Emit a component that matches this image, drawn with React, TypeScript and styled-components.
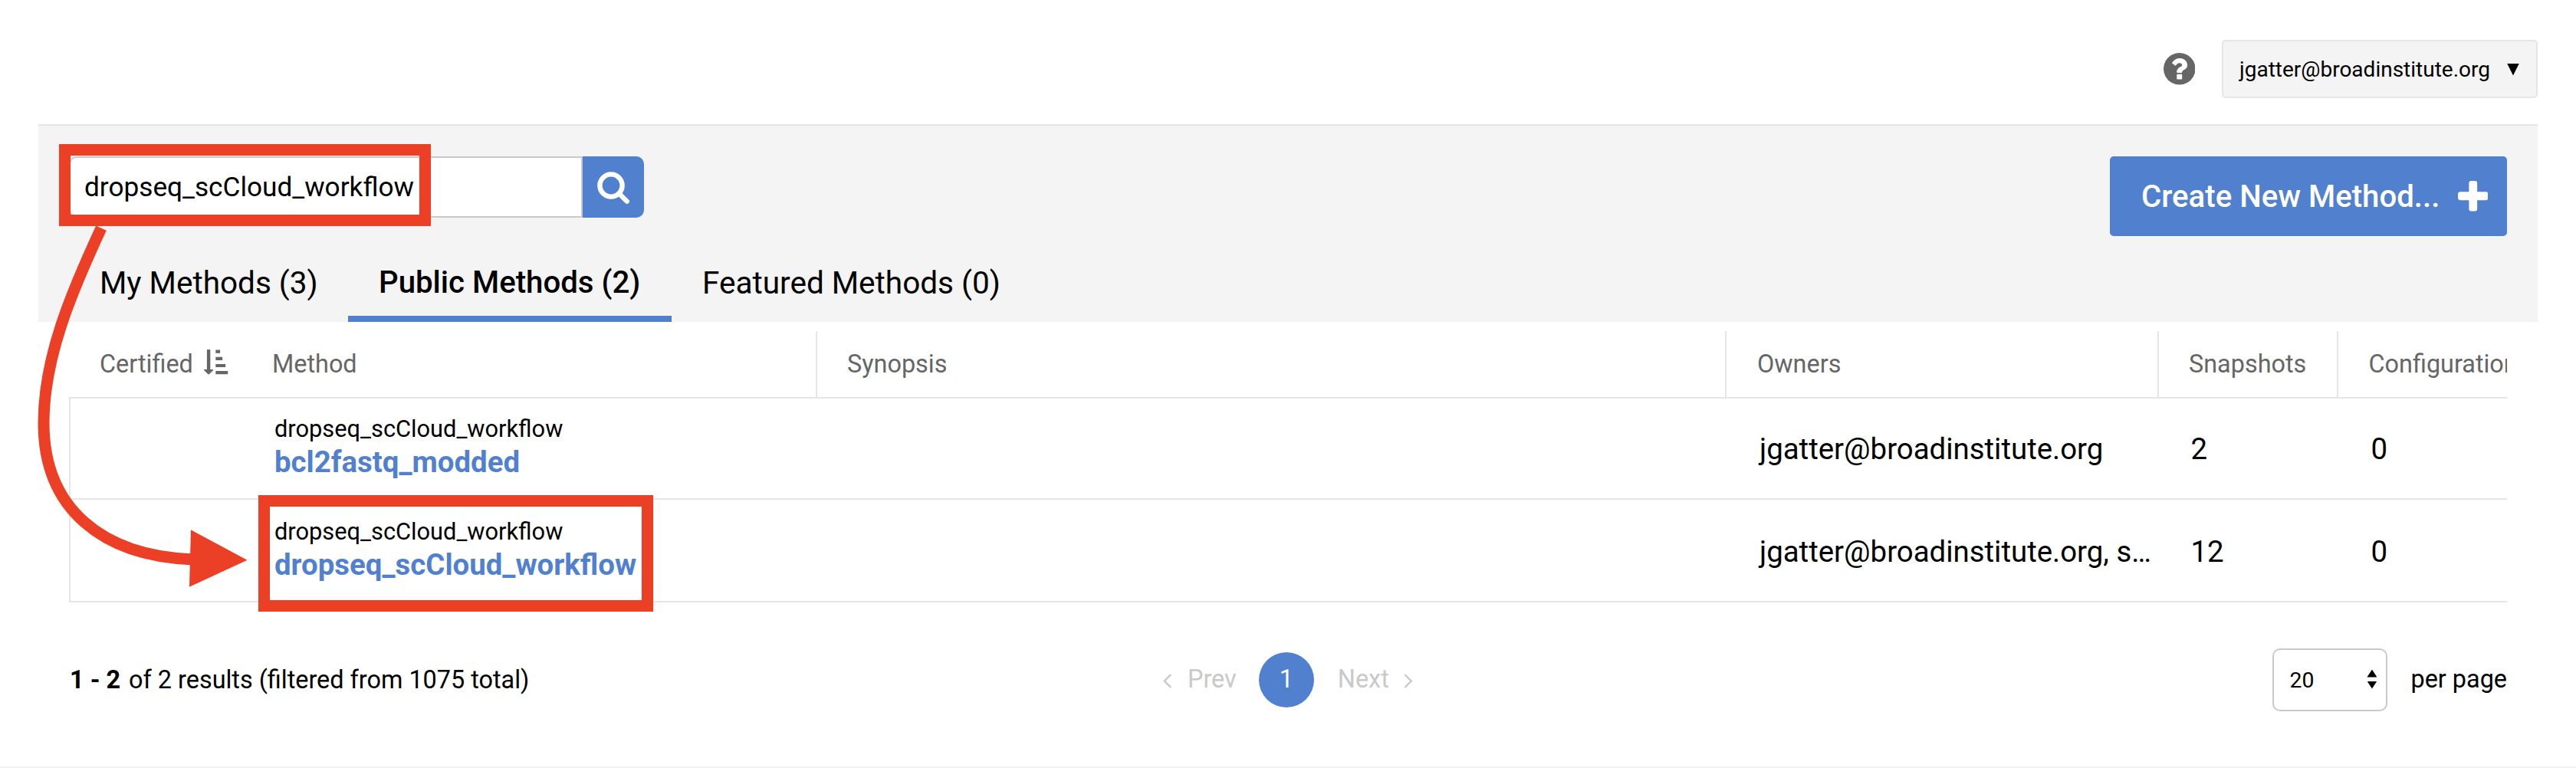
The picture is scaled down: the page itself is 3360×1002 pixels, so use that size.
import React from 'react';
import styled, { createGlobalStyle } from 'styled-components';

const BLUE = '#5181ce';
const RED = '#eb4026';
const LINE = '#e6e6e6';
const FIELD_LINE = '#c9c9c9';
const MUTED = '#666666';

const GlobalStyle = createGlobalStyle`
  *, *::before, *::after { box-sizing: border-box; }
  html, body { margin: 0; padding: 0; background: #fff; }
  body { font-family: Roboto, "Liberation Sans", sans-serif; color: #000; }
  button, input { font: inherit; color: inherit; }
`;

const Page = styled.div`
  position: relative;
  display: flex;
  flex-direction: column;
  width: 3360px;
  height: 1002px;
  overflow: hidden;
  background: #fff;
  border-bottom: 2px solid #f2f2f2;
`;

const TopBar = styled.header`
  display: flex;
  justify-content: flex-end;
  align-items: center;
  gap: 35px;
  height: 162px;
  padding: 52px 50px 34px 0;
`;

const UserMenu = styled.div`
  display: flex;
  align-items: center;
  justify-content: space-between;
  width: 412px;
  height: 76px;
  padding: 1px 22px 0 21px;
  border: 2px solid ${LINE};
  border-radius: 5px;
  background: #f4f4f4;
  font-size: 28px;
  line-height: 40px;
`;

const Caret = styled.span<{ $up?: boolean; $w: number; $h: number }>`
  width: ${p => p.$w}px;
  height: ${p => p.$h}px;
  background: #000;
  clip-path: ${p => (p.$up ? 'polygon(50% 0, 100% 100%, 0 100%)' : 'polygon(0 0, 100% 0, 50% 100%)')};
`;

const Banner = styled.section`
  display: flex;
  flex-direction: column;
  justify-content: space-between;
  height: 258px;
  margin: 0 50px;
  padding: 40px 40px 0;
  border-top: 2px solid ${LINE};
  background: #f4f4f4;
`;

const Actions = styled.div`
  display: flex;
  justify-content: space-between;
  align-items: flex-start;
`;

const SearchForm = styled.div`
  display: flex;
  height: 80px;
`;

const SearchInput = styled.input`
  width: 670px;
  height: 80px;
  padding: 0 18px;
  border: 2px solid ${FIELD_LINE};
  border-radius: 10px 0 0 10px;
  background: #fff;
  outline: none;
  font-size: 35.2px;
`;

const SearchButton = styled.button`
  display: flex;
  width: 80px;
  height: 80px;
  padding: 20px 0 0 19px;
  border: 0;
  border-radius: 0 10px 10px 0;
  background: ${BLUE};
`;

const CreateButton = styled.button`
  display: flex;
  align-items: center;
  justify-content: space-between;
  width: 518px;
  height: 104px;
  padding: 0 25px 0 41px;
  border: 0;
  border-radius: 5px;
  background: ${BLUE};
  color: #fff;
  font-size: 40.2px;
  font-weight: 500;
`;

const Tabs = styled.nav`
  display: flex;
  height: 100px;
`;

const Tab = styled.a<{ $active?: boolean; $w: number }>`
  width: ${p => p.$w}px;
  height: 100px;
  padding: 25px 0 0 40px;
  border-bottom: 8px solid ${p => (p.$active ? BLUE : 'transparent')};
  font-size: ${p => (p.$active ? 40.2 : 40.5)}px;
  font-weight: ${p => (p.$active ? 500 : 400)};
  line-height: 48px;
  white-space: nowrap;
`;

const Table = styled.div`
  display: flex;
  flex-direction: column;
  margin: 12px 90px 0;
  overflow: hidden;
`;

const HeadRow = styled.div`
  display: grid;
  grid-template-columns: 264px 710px 1186px 564px 234px 400px;
  height: 86px;
  color: ${MUTED};
  font-size: 32.4px;
`;

const HeadCell = styled.div<{ $divided?: boolean; $pad: number }>`
  display: flex;
  align-items: center;
  gap: 15px;
  padding-left: ${p => p.$pad}px;
  border-left: ${p => (p.$divided ? `2px solid ${LINE}` : '0')};
`;

const Body = styled.div`
  border: solid ${LINE};
  border-width: 0 0 2px 2px;
`;

const Row = styled.div<{ $h: number; $top?: number }>`
  display: grid;
  grid-template-columns: 262px 710px 1186px 564px 234px 400px;
  height: ${p => p.$h}px;
  padding-top: ${p => p.$top ?? 0}px;
  border-top: 2px solid ${LINE};
`;

const Cell = styled.div<{ $pad: number }>`
  display: flex;
  align-items: center;
  padding-left: ${p => p.$pad}px;
  font-size: 38.4px;
  white-space: nowrap;
`;

const MethodCell = styled.div`
  display: flex;
  flex-direction: column;
  padding: 22px 0 0 4px;
`;

const Namespace = styled.span`
  font-size: 30.8px;
  line-height: 36px;
`;

const MethodLink = styled.a`
  margin-top: 2px;
  color: ${BLUE};
  font-size: 38.4px;
  font-weight: 700;
  line-height: 46px;
`;

const Footer = styled.footer`
  display: grid;
  grid-template-columns: 1427px 326px 1fr;
  align-items: center;
  height: 82px;
  margin: 60px 90px 0;
  font-size: 32.4px;
`;

const Results = styled.div`
  padding-left: 1px;
  line-height: 40px;
`;

const Range = styled.b`
  margin-right: 3px;
`;

const Pager = styled.div`
  display: flex;
  align-items: center;
  width: 326px;
  height: 72px;
  color: ${FIELD_LINE};
`;

const PagerWord = styled.span<{ $left: number; $right: number }>`
  margin: 0 ${p => p.$right}px 2px ${p => p.$left}px;
  line-height: 40px;
`;

const CurrentPage = styled.span`
  display: flex;
  justify-content: center;
  align-items: center;
  width: 72px;
  height: 72px;
  padding-bottom: 2px;
  border-radius: 50%;
  background: ${BLUE};
  color: #fff;
`;

const PagerChevron = styled.span`
  display: flex;
  padding-top: 3px;
`;

const PerPage = styled.div`
  display: flex;
  justify-content: flex-end;
  align-items: center;
  gap: 30px;
`;

const Select = styled.div`
  display: flex;
  justify-content: space-between;
  align-items: center;
  width: 150px;
  height: 82px;
  padding: 0 12px 0 20px;
  border: 2px solid ${FIELD_LINE};
  border-radius: 10px;
  background: #fff;
  font-size: 28.4px;
`;

const Spinner = styled.span`
  display: flex;
  flex-direction: column;
  gap: 5px;
  padding-bottom: 2px;
`;

const PerPageLabel = styled.span`
  padding-bottom: 3px;
  line-height: 40px;
`;

const Highlight = styled.div<{ $x: number; $y: number; $w: number; $h: number }>`
  position: absolute;
  left: ${p => p.$x}px;
  top: ${p => p.$y}px;
  width: ${p => p.$w}px;
  height: ${p => p.$h}px;
  border: 15px solid ${RED};
  pointer-events: none;
`;

const Pointer = styled.svg`
  position: absolute;
  left: 40px;
  top: 285px;
  pointer-events: none;
`;

const HelpIcon = () => (
  <svg width="41.5" height="41.5" viewBox="128 128 1536 1536" fill={MUTED}>
    <path d="M1024 1376v-192q0-14-9-23t-23-9h-192q-14 0-23 9t-9 23v192q0 14 9 23t23 9h192q14 0 23-9t9-23zM1280 704q0-88-55.5-163t-138.5-116-170-41q-243 0-371 213-15 24 8 42l132 100q7 6 19 6 16 0 25-12 53-68 86-92 34-24 86-24 48 0 85.5 26t37.5 59q0 38-20 61t-68 45q-63 28-115.5 86.5t-52.5 125.5v36q0 14 9 23t23 9h192q14 0 23-9t9-23q0-19 21.5-49.5t54.5-49.5q32-18 49-28.5t46-35 44.5-48 28-60.5 12.5-81zM1664 896q0 209-103 385.5t-279.5 279.5-385.5 103-385.5-103-279.5-279.5-103-385.5 103-385.5 279.5-279.5 385.5-103 385.5 103 279.5 279.5 103 385.5z" />
  </svg>
);

const PlusIcon = () => (
  <svg width="39.5" height="39.5" viewBox="192 128 1408 1408" fill="#fff">
    <path d="M1600 736v192q0 40-28 68t-68 28h-416v416q0 40-28 68t-68 28h-192q-40 0-68-28t-28-68v-416h-416q-40 0-68-28t-28-68v-192q0-40 28-68t68-28h416v-416q0-40 28-68t68-28h192q40 0 68 28t28 68v416h416q40 0 68 28t28 68z" />
  </svg>
);

const SearchIcon = () => (
  <svg width="43" height="43" viewBox="0 0 43 43" fill="none" stroke="#fff">
    <circle cx="18" cy="18" r="14.6" strokeWidth="6.4" />
    <path d="M28.5 28.5 38.8 38.8" strokeWidth="6.2" strokeLinecap="round" />
  </svg>
);

const SortIcon = () => (
  <svg width="32" height="33" viewBox="0 0 32 33" fill={MUTED}>
    <path d="M4.6 0h3a.7.7 0 0 1 .7.7V26h3.2q1 .4.4 1.3L6.8 32.3q-.7.5-1.4 0L.3 27.3Q-.2 26.4.7 26h3.2V.7a.7.7 0 0 1 .7-.7z" />
    <path d="M15.3.6h5.8v4.2h-5.8zM15.3 9.8h8.8V14h-8.8zM15.3 19h12.8v4.1H15.3zM15.3 28h15.9v4.3H15.3z" />
  </svg>
);

const SortMark = styled.span`
  display: flex;
  margin: 0 0 5px -1px;
`;

const Chevron = ({ left }: { left?: boolean }) => (
  <svg width="12" height="19" viewBox="0 0 12 19" fill="none" stroke={FIELD_LINE} strokeWidth="2.4">
    <path d={left ? 'M10.3 1 1.8 9.5l8.5 8.5' : 'M1.3 1l8.5 8.5L1.3 18'} />
  </svg>
);

const columns = [
  { label: 'Method', pad: 1, divided: false },
  { label: 'Synopsis', pad: 39, divided: true },
  { label: 'Owners', pad: 40, divided: true },
  { label: 'Snapshots', pad: 39, divided: true },
  { label: 'Configurations', pad: 39.5, divided: true },
];

const methods = [
  { ns: 'dropseq_scCloud_workflow', name: 'bcl2fastq_modded', owners: 'jgatter@broadinstitute.org', snapshots: 2, configs: 0, h: 132, top: 0 },
  { ns: 'dropseq_scCloud_workflow', name: 'dropseq_scCloud_workflow', owners: 'jgatter@broadinstitute.org, s…', snapshots: 12, configs: 0, h: 134, top: 2 },
];

export default function App() {
  return (
    <>
      <GlobalStyle />
      <Page>
        <TopBar>
          <HelpIcon />
          <UserMenu>
            jgatter@broadinstitute.org
            <Caret $w={16} $h={16} />
          </UserMenu>
        </TopBar>

        <Banner>
          <Actions>
            <SearchForm>
              <SearchInput defaultValue="dropseq_scCloud_workflow" />
              <SearchButton aria-label="Search">
                <SearchIcon />
              </SearchButton>
            </SearchForm>
            <CreateButton>
              Create New Method...
              <PlusIcon />
            </CreateButton>
          </Actions>
          <Tabs>
            <Tab $w={364}>My Methods (3)</Tab>
            <Tab $w={422} $active>Public Methods (2)</Tab>
            <Tab $w={470}>Featured Methods (0)</Tab>
          </Tabs>
        </Banner>

        <Table>
          <HeadRow>
            <HeadCell $pad={40}>
              Certified
              <SortMark><SortIcon /></SortMark>
            </HeadCell>
            {columns.map(c => (
              <HeadCell key={c.label} $pad={c.pad} $divided={c.divided}>{c.label}</HeadCell>
            ))}
          </HeadRow>
          <Body>
            {methods.map(m => (
              <Row key={m.name} $h={m.h} $top={m.top}>
                <Cell $pad={0} />
                <MethodCell>
                  <Namespace>{m.ns}</Namespace>
                  <MethodLink>{m.name}</MethodLink>
                </MethodCell>
                <Cell $pad={0} />
                <Cell $pad={45}>{m.owners}</Cell>
                <Cell $pad={43.5}>{m.snapshots}</Cell>
                <Cell $pad={44.5}>{m.configs}</Cell>
              </Row>
            ))}
          </Body>
        </Table>

        <Footer>
          <Results>
            <Range>1 - 2</Range> of 2 results (filtered from 1075 total)
          </Results>
          <Pager>
            <PagerChevron><Chevron left /></PagerChevron>
            <PagerWord $left={20} $right={29}>Prev</PagerWord>
            <CurrentPage>1</CurrentPage>
            <PagerWord $left={31} $right={19}>Next</PagerWord>
            <PagerChevron><Chevron /></PagerChevron>
          </Pager>
          <PerPage>
            <Select>
              20
              <Spinner>
                <Caret $up $w={13} $h={10} />
                <Caret $w={13} $h={10} />
              </Spinner>
            </Select>
            <PerPageLabel>per page</PerPageLabel>
          </PerPage>
        </Footer>

        <Highlight $x={77} $y={188} $w={485} $h={107} />
        <Highlight $x={337} $y={646} $w={515} $h={152} />
        <Pointer width="300" height="490" viewBox="40 285 300 490">
          <path d="M132 297.7C92 384 57 467 57 552c0 113 78 173 192 177.7" fill="none" stroke={RED} strokeWidth="15" />
          <path d="M249 691.3 322.5 730.7 247 765.7z" fill={RED} />
        </Pointer>
      </Page>
    </>
  );
}
